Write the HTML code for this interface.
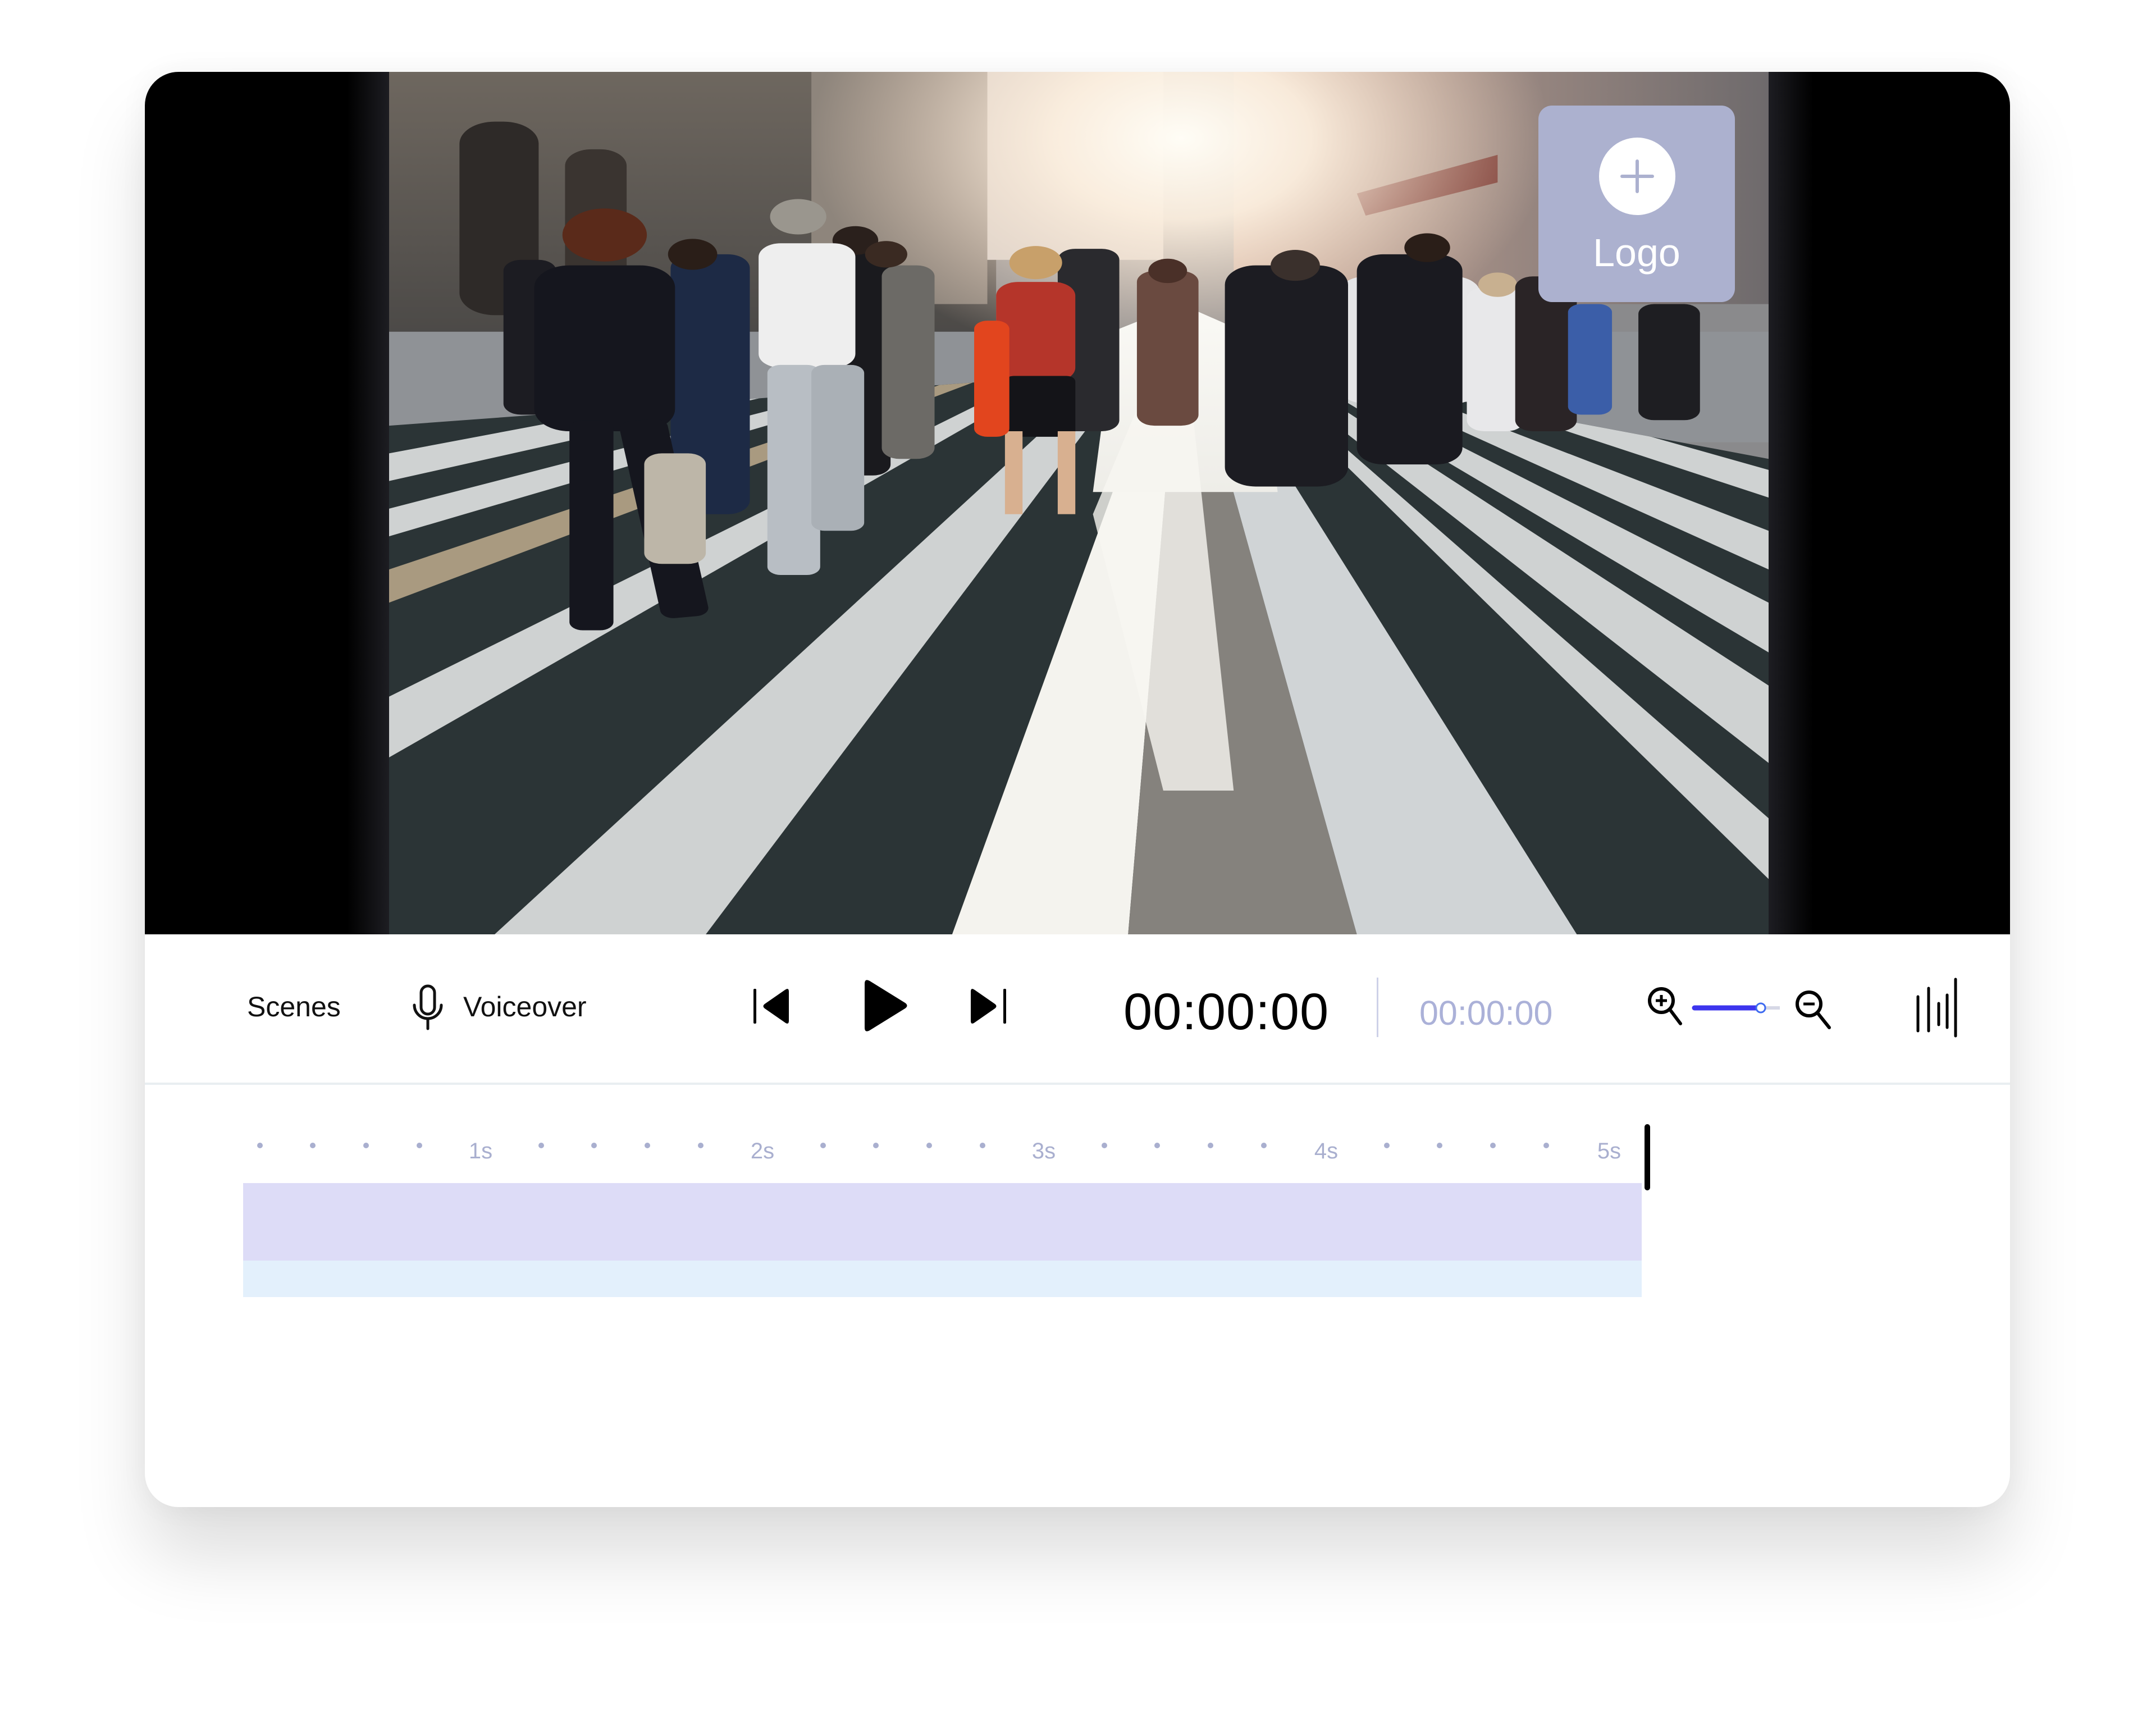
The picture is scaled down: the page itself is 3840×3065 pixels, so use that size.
<!DOCTYPE html>
<html><head><meta charset="utf-8"><style>
html,body{margin:0;padding:0;background:#fff;}
body{width:3840px;height:3065px;position:relative;overflow:hidden;font-family:"Liberation Sans",sans-serif;}
.card{position:absolute;left:258px;top:128px;width:3322px;height:2556px;background:#fff;border-radius:60px;overflow:hidden;box-shadow:0 90px 160px rgba(0,0,0,0.13),0 0 50px rgba(0,0,0,0.05);}
.abs{position:absolute;}
.txt{position:absolute;white-space:nowrap;line-height:1;}
</style></head><body>
<div class="card">
  <div class="abs" style="left:0;top:0;width:3322px;height:1536px;background:#000;"></div>
  <div class="abs" style="left:360px;top:0;width:75px;height:1536px;background:linear-gradient(90deg,#000,#1d1d22);"></div>
  <div class="abs" style="left:2892px;top:0;width:80px;height:1536px;background:linear-gradient(90deg,#1d1d22,#000);"></div>
  <svg class="abs" style="left:435px;top:0" width="2457" height="1536" viewBox="0 0 1568 1560" preserveAspectRatio="none">
    <defs>
      <radialGradient id="sun" cx="900" cy="120" r="420" gradientUnits="userSpaceOnUse">
        <stop offset="0" stop-color="#fffdf6"/><stop offset="0.35" stop-color="#fbeede" stop-opacity="0.95"/><stop offset="1" stop-color="#f3d7c0" stop-opacity="0"/>
      </radialGradient>
      <linearGradient id="lb" x1="0" y1="0" x2="0" y2="1"><stop offset="0" stop-color="#6e675f"/><stop offset="1" stop-color="#4a4846"/></linearGradient>
      <linearGradient id="rb" x1="0" y1="0" x2="1" y2="0"><stop offset="0" stop-color="#c9a898"/><stop offset="1" stop-color="#6e6a6c"/></linearGradient>
      <linearGradient id="lit" x1="0" y1="0" x2="0" y2="1"><stop offset="0" stop-color="#fbfaf6"/><stop offset="1" stop-color="#eeede8"/></linearGradient>
      <clipPath id="road"><polygon points="0,640 680,560 900,420 1100,560 1568,700 1568,1560 0,1560"/></clipPath>
    </defs>
    <rect width="1568" height="1560" fill="#8a8a8c"/>
    <rect x="0" y="0" width="690" height="500" fill="url(#lb)"/>
    <rect x="80" y="90" width="90" height="350" rx="40" fill="#2e2a28"/>
    <rect x="200" y="140" width="70" height="300" rx="30" fill="#3a3430"/>
    <rect x="480" y="0" width="200" height="420" fill="#8e857c"/>
    <rect x="680" y="0" width="200" height="340" fill="#d6d0cb"/>
    <rect x="960" y="0" width="608" height="420" fill="url(#rb)"/>
    <polygon points="1100,220 1260,150 1260,200 1110,260" fill="#7a3a34"/>
    <rect x="0" y="470" width="1568" height="200" fill="#8f9296"/>
    <rect width="1568" height="700" fill="url(#sun)"/>
    <g clip-path="url(#road)">
      <rect x="0" y="400" width="1568" height="1160" fill="#2b3436"/>
      <g fill="#cfd2d2">
        <polygon points="900,420 0,690 0,740"/>
        <polygon points="900,420 0,790 0,840"/>
        <polygon points="900,420 0,900 0,960" fill="#a99a80"/>
        <polygon points="900,420 0,1130 0,1240"/>
        <polygon points="900,420 120,1560 360,1560"/>
        <polygon points="900,420 640,1560 840,1560" fill="#f4f3ee"/>
        <polygon points="900,420 840,1560 1100,1560" fill="#85827d"/>
        <polygon points="900,420 1100,1560 1350,1560" fill="#d0d4d6"/>
        <polygon points="900,420 1568,1350 1568,1460"/>
        <polygon points="900,420 1568,1110 1568,1250"/>
        <polygon points="900,420 1568,960 1568,1050"/>
        <polygon points="900,420 1568,830 1568,900"/>
        <polygon points="900,420 1568,720 1568,770"/>
      </g>
      <polygon points="830,400 980,400 1010,760 800,760" fill="url(#lit)"/>
      <polygon points="900,420 800,800 880,1300 960,1300" fill="#f7f6f1" opacity="0.8"/>
    </g>
    <g>
      <rect x="1080" y="370" width="160" height="230" rx="30" fill="#e6e6e8"/>
      <rect x="130" y="340" width="60" height="280" rx="20" fill="#1c1c22"/>
      <rect x="320" y="330" width="90" height="470" rx="25" fill="#1d2a45"/><circle cx="345" cy="330" r="28" fill="#2a1e18"/>
      <rect x="500" y="310" width="70" height="420" rx="20" fill="#1a1a1e"/><circle cx="530" cy="305" r="26" fill="#2a201c"/>
      <rect x="560" y="350" width="60" height="350" rx="20" fill="#6c6a66"/><circle cx="565" cy="330" r="24" fill="#3a2a22"/>
      <rect x="760" y="320" width="70" height="330" rx="20" fill="#2a2a2e"/>
      <rect x="850" y="360" width="70" height="280" rx="20" fill="#6a4a40"/><circle cx="885" cy="360" r="22" fill="#4a3028"/>
      <rect x="950" y="350" width="140" height="400" rx="35" fill="#1c1c22"/><circle cx="1030" cy="350" r="28" fill="#3a302c"/>
      <rect x="1100" y="330" width="120" height="380" rx="30" fill="#1a1a20"/><circle cx="1180" cy="318" r="26" fill="#2a1e18"/>
      <rect x="1225" y="390" width="65" height="260" rx="20" fill="#e8e8ea"/><circle cx="1260" cy="385" r="22" fill="#c8b090"/>
      <rect x="1280" y="370" width="70" height="280" rx="20" fill="#2a2426"/>
      <rect x="1340" y="420" width="50" height="200" rx="15" fill="#3b5ea8"/>
      <rect x="1420" y="420" width="70" height="210" rx="18" fill="#1e1e22"/>
      <rect x="690" y="380" width="90" height="180" rx="25" fill="#b5352a"/><circle cx="735" cy="345" r="30" fill="#c8a06a"/>
      <rect x="700" y="550" width="80" height="110" rx="10" fill="#141418"/>
      <rect x="700" y="650" width="20" height="150" fill="#d8b090"/><rect x="760" y="650" width="20" height="150" fill="#d8b090"/>
      <rect x="665" y="450" width="40" height="210" rx="15" fill="#e2451e"/>
      <rect x="420" y="310" width="110" height="225" rx="25" fill="#eeeeee"/><circle cx="465" cy="262" r="32" fill="#9a968e"/>
      <rect x="430" y="530" width="60" height="380" rx="15" fill="#b8bec4"/><rect x="480" y="530" width="60" height="300" rx="15" fill="#aab0b6"/>
      <circle cx="245" cy="295" r="48" fill="#5a2a1a"/>
      <rect x="165" y="350" width="160" height="300" rx="40" fill="#15161e"/>
      <rect x="205" y="630" width="50" height="380" rx="15" fill="#15161e"/><rect x="260" y="630" width="55" height="360" rx="15" fill="#15161e" transform="rotate(-8 285 630)"/>
      <rect x="290" y="690" width="70" height="200" rx="20" fill="#bdb6a8"/>
    </g>
  </svg>
  <div class="abs" style="left:2482px;top:60px;width:350px;height:350px;background:#acb1cf;border-radius:24px;"></div>
  <div class="abs" style="left:2590px;top:117px;width:136px;height:138px;background:#fff;border-radius:50%;"></div>
  <div class="abs" style="left:2655px;top:156px;width:6px;height:60px;background:#acb1cf;border-radius:3px;"></div>
  <div class="abs" style="left:2628px;top:183px;width:60px;height:6px;background:#acb1cf;border-radius:3px;"></div>
  <div class="txt" style="left:2482px;width:350px;text-align:center;top:287px;font-size:70px;color:#fff;">Logo</div>

  <div class="txt" style="left:182px;top:1640px;font-size:50px;color:#111;">Scenes</div>
  <svg class="abs" style="left:474px;top:1624px" width="60" height="84" viewBox="0 0 60 84">
    <rect x="18" y="4" width="24" height="50" rx="12" fill="none" stroke="#111" stroke-width="5"/>
    <path d="M6 38 a24 24 0 0 0 48 0" fill="none" stroke="#111" stroke-width="5" stroke-linecap="round"/>
    <line x1="30" y1="62" x2="30" y2="80" stroke="#111" stroke-width="5" stroke-linecap="round"/>
  </svg>
  <div class="txt" style="left:567px;top:1640px;font-size:50px;color:#111;">Voiceover</div>
  <svg class="abs" style="left:1080px;top:1610px" width="500" height="120" viewBox="1338 1740 500 120">
    <rect x="1342" y="1763" width="5" height="62" rx="2" fill="#000"/>
    <path d="M1405 1768 L1405 1820 Q1405 1828 1398 1823 L1362 1798 Q1357 1794 1362 1790 L1398 1765 Q1405 1760 1405 1768Z" fill="#000"/>
    <path d="M1540 1754 L1540 1832 Q1540 1842 1549 1837 L1612 1798 Q1619 1793 1612 1788 L1549 1749 Q1540 1744 1540 1754Z" fill="#000"/>
    <path d="M1729 1768 L1729 1820 Q1729 1828 1736 1823 L1772 1798 Q1777 1794 1772 1790 L1736 1765 Q1729 1760 1729 1768Z" fill="#000"/>
    <rect x="1787" y="1763" width="5" height="62" rx="2" fill="#000"/>
  </svg>
  <div class="txt" style="left:1743px;top:1628px;font-size:92px;letter-spacing:1px;color:#000;">00:00:00</div>
  <div class="abs" style="left:2194px;top:1613px;width:3px;height:106px;background:#cdd1e8;"></div>
  <div class="txt" style="left:2270px;top:1646px;font-size:61px;color:#abb1d8;">00:00:00</div>
  <svg class="abs" style="left:2660px;top:1600px" width="680" height="140" viewBox="2918 1728 680 140">
    <circle cx="2959" cy="1782" r="21" fill="none" stroke="#000" stroke-width="6"/>
    <line x1="2959" y1="1772" x2="2959" y2="1792" stroke="#000" stroke-width="5"/>
    <line x1="2949" y1="1782" x2="2969" y2="1782" stroke="#000" stroke-width="5"/>
    <line x1="2975" y1="1799" x2="2993" y2="1823" stroke="#000" stroke-width="6" stroke-linecap="round"/>
    <line x1="3136" y1="1795" x2="3170" y2="1795" stroke="#d6d8e6" stroke-width="6"/>
    <line x1="3018" y1="1795" x2="3136" y2="1795" stroke="#3d35ee" stroke-width="9" stroke-linecap="round"/>
    <circle cx="3136" cy="1795" r="8" fill="#fff" stroke="#3d6af0" stroke-width="3"/>
    <circle cx="3222" cy="1788" r="21" fill="none" stroke="#000" stroke-width="6"/>
    <line x1="3212" y1="1788" x2="3232" y2="1788" stroke="#000" stroke-width="5"/>
    <line x1="3238" y1="1805" x2="3258" y2="1830" stroke="#000" stroke-width="6" stroke-linecap="round"/>
    <g stroke="#000" stroke-width="5" stroke-linecap="round">
      <line x1="3416" y1="1775" x2="3416" y2="1836"/>
      <line x1="3435" y1="1760" x2="3435" y2="1836"/>
      <line x1="3453" y1="1787" x2="3453" y2="1825"/>
      <line x1="3468" y1="1772" x2="3468" y2="1830"/>
      <line x1="3483" y1="1744" x2="3483" y2="1845"/>
    </g>
  </svg>
  <div class="abs" style="left:0;top:1800px;width:3322px;height:4px;background:#e9eef1;"></div>

  <svg class="abs" style="left:0;top:1840px" width="3322" height="200" viewBox="258 1968 3322 200">
    <g fill="#a9afcf">
      <circle cx="463" cy="2040" r="5"/><circle cx="557" cy="2040" r="5"/><circle cx="652" cy="2040" r="5"/><circle cx="747" cy="2040" r="5"/>
      <circle cx="964" cy="2040" r="5"/><circle cx="1058" cy="2040" r="5"/><circle cx="1153" cy="2040" r="5"/><circle cx="1248" cy="2040" r="5"/>
      <circle cx="1466" cy="2040" r="5"/><circle cx="1560" cy="2040" r="5"/><circle cx="1655" cy="2040" r="5"/><circle cx="1750" cy="2040" r="5"/>
      <circle cx="1967" cy="2040" r="5"/><circle cx="2061" cy="2040" r="5"/><circle cx="2156" cy="2040" r="5"/><circle cx="2251" cy="2040" r="5"/>
      <circle cx="2470" cy="2040" r="5"/><circle cx="2564" cy="2040" r="5"/><circle cx="2659" cy="2040" r="5"/><circle cx="2754" cy="2040" r="5"/>
    </g>
    <g fill="#a9afcf" font-family="Liberation Sans, sans-serif" font-size="40" text-anchor="middle">
      <text x="856" y="2063">1s</text><text x="1358" y="2063">2s</text><text x="1859" y="2063">3s</text><text x="2362" y="2063">4s</text><text x="2866" y="2063">5s</text>
    </g>
  </svg>
  <div class="abs" style="left:175px;top:1979px;width:2491px;height:138px;background:#dddcf7;"></div>
  <div class="abs" style="left:175px;top:2117px;width:2491px;height:65px;background:#e3f0fc;"></div>
  <div class="abs" style="left:2671px;top:1874px;width:10px;height:118px;background:#000;border-radius:5px;"></div>
</div>
</body></html>
